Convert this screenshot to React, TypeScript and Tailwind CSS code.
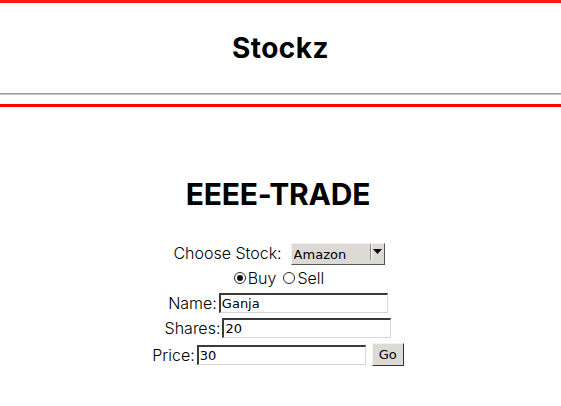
import { useState } from "react"

const control = "font-['DejaVu_Sans',sans-serif] text-[13px] font-normal text-black"

function Radio({ checked, label, onClick }: { checked: boolean; label: string; onClick: () => void }) {
  return (
    <label onClick={onClick} className="flex cursor-pointer items-center">
      <span className="mr-[2px] grid h-[12px] w-[12px] place-items-center rounded-full border border-[#2a2a2a] bg-white">
        {checked && <span className="h-[6px] w-[6px] rounded-full bg-[#111]" />}
      </span>
      {label}
    </label>
  )
}

function Field({ label, value }: { label: string; value: string }) {
  return (
    <div className="flex h-[20px] items-center gap-[2px]">
      <span>{label}</span>
      <input
        defaultValue={value}
        className={`${control} h-[20px] w-[169px] border-t-2 border-l-2 border-r border-b border-t-[#3a3a3a] border-l-[#3a3a3a] border-r-[#d6d6d6] border-b-[#d6d6d6] bg-white px-[1px] outline-none`}
      />
    </div>
  )
}

export default function App() {
  const [side, setSide] = useState<"buy" | "sell">("buy")

  return (
    <div className="min-h-[406px] bg-white font-['Inter',sans-serif] text-black">
      <header className="flex h-[93px] items-center justify-center border-t-[3px] border-[#ff1a1a]">
        <h1 className="text-[28px] font-bold leading-none tracking-[0.5px]">Stockz</h1>
      </header>
      <div className="h-[2px] border-t border-b border-t-[#999] border-b-[#c8c8c8]" />
      <div className="mt-[9px] border-t-[3px] border-[#ff0000]" />

      <main className="flex flex-col items-center pr-[5px]">
        <h2 className="mt-[67px] text-[30px] font-bold leading-[40px] tracking-[-0.2px]">EEEE-TRADE</h2>

        <form className="mt-[28px] flex flex-col items-center text-[16px] font-light">
          <div className="flex h-[22px] items-center gap-[9px] pl-[2px]">
            <span>Choose Stock:</span>
            <div className="relative">
              <select
                defaultValue="amazon"
                className={`${control} h-[22px] w-[94px] appearance-none border border-t-[#f2f1ef] border-l-[#f2f1ef] border-r-[#555] border-b-[#555] bg-[#dcdad5] pl-[2px] outline-none`}
              >
                <option value="amazon">Amazon</option>
                <option value="apple">Apple</option>
                <option value="google">Google</option>
              </select>
              <span className="pointer-events-none absolute right-[1px] top-[3px] flex h-[16px] w-[14px] items-center justify-center border-l border-l-[#888] shadow-[inset_1px_0_0_#fff]">
                <svg width="9" height="5" viewBox="0 0 9 5">
                  <path d="M0 0h9L4.5 5z" fill="#000" />
                </svg>
              </span>
            </div>
          </div>

          <div className="mt-[4px] flex h-[20px] items-center gap-[7px] pl-[2px]">
            <Radio checked={side === "buy"} label="Buy" onClick={() => setSide("buy")} />
            <Radio checked={side === "sell"} label="Sell" onClick={() => setSide("sell")} />
          </div>

          <div className="mt-[5px]">
            <Field label="Name:" value="Ganja" />
          </div>
          <div className="mt-[5px]">
            <Field label="Shares:" value="20" />
          </div>
          <div className="mt-[5px] flex h-[23px] items-center gap-[6px]">
            <Field label="Price:" value="30" />
            <button
              type="button"
              className={`${control} h-[23px] w-[32px] border border-t-[#f4f3f1] border-l-[#f4f3f1] border-r-[#333] border-b-[#333] bg-[#dcdad5]`}
            >
              Go
            </button>
          </div>
        </form>
      </main>
    </div>
  )
}
